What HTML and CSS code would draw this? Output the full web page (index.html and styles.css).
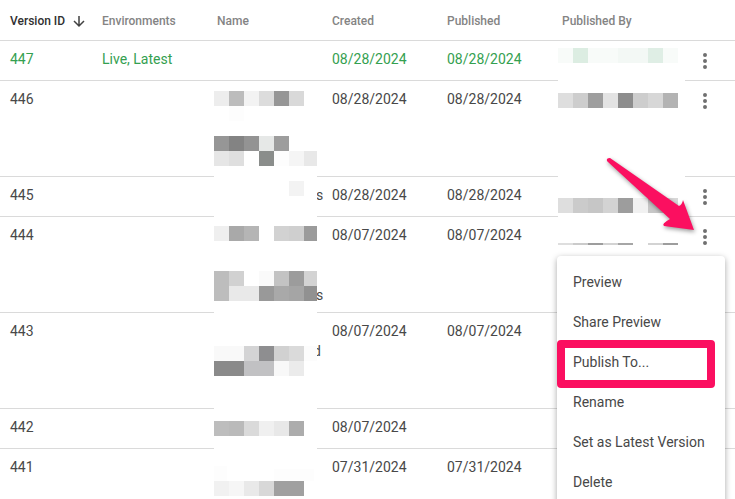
FILE: index.html
```html
<!DOCTYPE html>
<html lang="en">
<head>
<meta charset="utf-8">
<title>Versions</title>
<link rel="stylesheet" href="styles.css">
</head>
<body>
<main class="versions">
<table>
<thead>
<tr>
<th class="col-id sorted" scope="col" aria-sort="descending"><span class="sort">Version ID <svg width="14" height="14" viewBox="0 0 14 14" aria-hidden="true"><path d="M7 2v10M2 7l5 5 5-5"/></svg></span></th>
<th class="col" scope="col">Environments</th>
<th class="col" scope="col">Name</th>
<th class="col" scope="col">Created</th>
<th class="col" scope="col">Published</th>
<th scope="col">Published By</th>
<th class="col-more" scope="col"></th>
</tr>
</thead>
<tbody>
<tr class="live"><td>447</td><td>Live, Latest</td><td></td><td>08/28/2024</td><td>08/28/2024</td><td></td><td class="more"><button aria-label="Actions for 447"><svg width="24" height="24" viewBox="0 0 24 24"><path d="M12 6h0M12 12h0M12 18h0"/></svg></button></td></tr>
<tr class="tall"><td>446</td><td></td><td></td><td>08/28/2024</td><td>08/28/2024</td><td></td><td class="more"><button aria-label="Actions for 446"><svg width="24" height="24" viewBox="0 0 24 24"><path d="M12 6h0M12 12h0M12 18h0"/></svg></button></td></tr>
<tr><td>445</td><td></td><td><span class="tail">s</span></td><td>08/28/2024</td><td>08/28/2024</td><td></td><td class="more"><button aria-label="Actions for 445"><svg width="24" height="24" viewBox="0 0 24 24"><path d="M12 6h0M12 12h0M12 18h0"/></svg></button></td></tr>
<tr class="tall"><td>444</td><td></td><td><br><br><br><span class="tail">s</span></td><td>08/07/2024</td><td>08/07/2024</td><td></td><td class="more"><button aria-label="Actions for 444" aria-expanded="true"><svg width="24" height="24" viewBox="0 0 24 24"><path d="M12 6h0M12 12h0M12 18h0"/></svg></button>
<div class="menu" role="menu">
<button role="menuitem">Preview</button>
<button role="menuitem">Share Preview</button>
<button role="menuitem" class="marked">Publish To...</button>
<button role="menuitem">Rename</button>
<button role="menuitem">Set as Latest Version</button>
<button role="menuitem">Delete</button>
</div>
<svg class="arrow" width="96" height="84" viewBox="604 154 96 84" aria-hidden="true"><path d="M607 161Q606 158 610 158L679 206Q682 205 683 200L694 230L664 226Q661 224 670 219L608 162Z"/></svg>
</td></tr>
<tr class="tall"><td>443</td><td></td><td><br><span class="tail cut">d</span></td><td>08/07/2024</td><td>08/07/2024</td><td></td><td></td></tr>
<tr><td>442</td><td></td><td></td><td>08/07/2024</td><td></td><td></td><td></td></tr>
<tr class="tall"><td>441</td><td></td><td></td><td>07/31/2024</td><td>07/31/2024</td><td></td><td></td></tr>
</tbody>
</table>
<svg class="mask mask-name" width="103" height="418" viewBox="214 82 103 418" shape-rendering="crispEdges" aria-hidden="true">
<path fill="#fff" d="M214 82h103v418H214z"/>
<path fill="#ededed" d="M214 91h15v15h-15z"/><path fill="#bcbcbc" d="M229 91h15v15h-15z"/><path fill="#f3f3f3" d="M244 91h15v15h-15z"/><path fill="#dcdcdc" d="M259 91h15v15h-15z"/><path fill="#969696" d="M274 91h15v15h-15z"/><path fill="#d9d9d9" d="M289 91h15v15h-15z"/><path fill="#fdfdfd" d="M229 106h15v15h-15z"/>
<path fill="#969696" d="M214 136h15v15h-15z"/><path fill="#838383" d="M229 136h15v15h-15z"/><path fill="#939393" d="M244 136h15v15h-15z"/><path fill="#e6e8e7" d="M259 136h15v15h-15z"/><path fill="#9d9d9d" d="M274 136h15v15h-15z"/>
<path fill="#e6e6e6" d="M214 151h15v15h-15z"/><path fill="#dfdfdf" d="M229 151h15v15h-15z"/><path fill="#8a8d8b" d="M259 151h15v15h-15z"/><path fill="#fdfdfd" d="M274 151h15v15h-15z"/><path fill="#f5f5f5" d="M289 151h15v15h-15z"/><path fill="#e8e8e8" d="M304 151h13v15h-13z"/>
<path fill="#f3f3f3" d="M289 181h15v15h-15z"/>
<path fill="#efefef" d="M214 226h15v15h-15z"/><path fill="#a9a9a9" d="M229 226h15v15h-15z"/><path fill="#b5b5b5" d="M244 226h15v15h-15z"/><path fill="#d2d2d2" d="M274 226h15v15h-15z"/><path fill="#cfcfcf" d="M289 226h15v15h-15z"/><path fill="#9b9b9b" d="M304 226h13v15h-13z"/>
<path fill="#bdbdbd" d="M214 271h15v30h-15z"/><path fill="#d1d1d1" d="M229 271h15v15h-15z"/><path fill="#fafafa" d="M259 271h15v15h-15z"/><path fill="#c3c3c3" d="M274 271h15v15h-15z"/><path fill="#9c9c9c" d="M289 271h15v15h-15z"/><path fill="#d3d3d3" d="M304 271h13v15h-13z"/>
<path fill="#e9e9e9" d="M229 286h30v15h-30z"/><path fill="#999" d="M259 286h15v15h-15z"/><path fill="#a9a9a9" d="M274 286h15v15h-15z"/><path fill="#a5a5a5" d="M289 286h15v15h-15z"/><path fill="#919191" d="M304 286h13v15h-13z"/>
<path fill="#f9f9f9" d="M214 346h30v15h-30z"/><path fill="#d4d4d5" d="M244 346h15v15h-15z"/><path fill="#8e8e90" d="M259 346h15v15h-15z"/><path fill="#d1d1d1" d="M274 346h15v15h-15z"/><path fill="#dadada" d="M289 346h15v15h-15z"/><path fill="#fcfcfc" d="M304 346h13v15h-13z"/>
<path fill="#8a8a8a" d="M214 361h30v15h-30z"/><path fill="#c1c1c3" d="M244 361h30v15h-30z"/><path fill="#f8f8f8" d="M274 361h15v15h-15z"/><path fill="#ebebeb" d="M289 361h15v15h-15z"/>
<path fill="#bdbdbd" d="M214 421h15v15h-15z"/><path fill="#bababa" d="M229 421h15v15h-15z"/><path fill="#dadada" d="M244 421h15v15h-15z"/><path fill="#f0f0f0" d="M259 421h15v15h-15z"/><path fill="#e8e8e8" d="M274 421h15v15h-15z"/><path fill="#acacac" d="M289 421h15v15h-15z"/>
<path fill="#fdfdfd" d="M214 466h13v15h-13zM274 469h40v12h-40z"/>
<path fill="#f1f1f1" d="M214 481h15v15h-15z"/><path fill="#f6f6f6" d="M229 481h15v15h-15z"/><path fill="#e9e9e9" d="M244 481h15v15h-15z"/><path fill="#d8d8d8" d="M259 481h15v15h-15z"/><path fill="#a0a0a0" d="M274 481h30v15h-30z"/>
</svg>
<svg class="mask mask-by" width="127" height="198" viewBox="558 47 127 198" shape-rendering="crispEdges" aria-hidden="true">
<path fill="#fff" d="M558 47h127v198H558z"/>
<path fill="#f8fbf9" d="M558 48h120v15H558z"/><path fill="#dcede2" d="M573 48h15v15h-15z"/><path fill="#f3f8f5" d="M618 48h30v15h-30z"/><path fill="#dfeee5" d="M648 48h15v15h-15z"/>
<path fill="#dedede" d="M558 93h15v15h-15z"/><path fill="#cdcdcd" d="M573 93h15v15h-15z"/><path fill="#9e9e9e" d="M588 93h15v15h-15z"/><path fill="#e3e3e3" d="M603 93h15v15h-15z"/><path fill="#8d8d8d" d="M618 93h15v15h-15z"/><path fill="#cdcdcd" d="M633 93h15v15h-15z"/><path fill="#d7d7d7" d="M648 93h15v15h-15z"/><path fill="#b3b3b3" d="M663 93h15v15h-15z"/>
<path fill="#dedede" d="M558 198h15v15h-15z"/><path fill="#cbcbcb" d="M573 198h15v15h-15z"/><path fill="#c6c6c6" d="M588 198h15v15h-15z"/><path fill="#d3d3d3" d="M603 198h15v15h-15z"/><path fill="#9d9d9d" d="M618 198h15v15h-15z"/><path fill="#f1f1f1" d="M633 198h15v15h-15z"/><path fill="#c7c7c7" d="M648 198h15v15h-15z"/><path fill="#d8d8d8" d="M663 198h15v15h-15z"/>
<path fill="#dedede" d="M558 243h15v2h-15z"/><path fill="#cbcbcb" d="M573 243h15v2h-15z"/><path fill="#9d9d9d" d="M588 243h15v2h-15z"/><path fill="#d3d3d3" d="M603 243h15v2h-15z"/><path fill="#a6a6a6" d="M618 243h15v2h-15z"/><path fill="#d3d3d3" d="M648 243h15v2h-15z"/><path fill="#9d9d9d" d="M663 243h15v2h-15z"/>
</svg>
</main>
</body>
</html>
```
FILE: styles.css
```css
* { box-sizing: border-box; }

body {
  margin: 0;
  background: #fff;
  color: #484848;
  font: 14px/20px Roboto, "Liberation Sans", sans-serif;
}

.versions {
  position: relative;
  height: 100vh;
  overflow: hidden;
}

table {
  width: 100%;
  table-layout: fixed;
  border-spacing: 0;
}

th, td {
  padding: 8px 0 0 10px;
  border-bottom: 1px solid #dadada;
  text-align: left;
  vertical-align: top;
}

th {
  height: 41px;
  padding-top: 11px;
  color: #848484;
  font-size: 12px;
  font-weight: 500;
}

td { height: 40px; }
.tall td { height: 96px; }

.col-id { width: 92px; }
.col { width: 115px; }
.col-more { width: 60px; }
.sorted { color: #303030; }
.live { color: #34a050; }

.sort {
  display: flex;
  align-items: center;
  gap: 7px;
  white-space: nowrap;
}

.sort svg {
  fill: none;
  stroke: #424242;
  stroke-width: 1.5;
}

.tail { display: block; padding-left: 99px; }
.tail.cut { padding-left: 96px; }

button {
  border: 0;
  padding: 0;
  background: none;
  color: inherit;
  font: inherit;
}

.more {
  position: relative;
  padding-left: 0;
  text-align: center;
}

.more > button { height: 24px; }

.more button svg {
  display: block;
  stroke: #707070;
  stroke-width: 4;
  stroke-linecap: round;
}

.menu {
  position: absolute;
  z-index: 2;
  top: 39px;
  right: 10px;
  width: 168px;
  padding: 6px 0;
  border-radius: 4px;
  background: #fff;
  box-shadow: 0 2px 6px rgba(0, 0, 0, .35);
}

.menu button {
  position: relative;
  display: block;
  width: 100%;
  height: 40px;
  padding: 0 16px;
  text-align: left;
  white-space: nowrap;
}

.marked::after {
  content: "";
  position: absolute;
  inset: -2px 10px -6px 0;
  border: 8px solid #fb0f60;
  border-radius: 4px;
}

.arrow {
  position: absolute;
  z-index: 3;
  right: 35px;
  top: -63px;
  fill: #fb0f60;
  filter: drop-shadow(1px 2px 2px rgba(0, 0, 0, .4));
}

.mask { position: absolute; z-index: 1; }
.mask-name { top: 82px; left: 214px; }
.mask-by { top: 47px; right: 50px; }
```
